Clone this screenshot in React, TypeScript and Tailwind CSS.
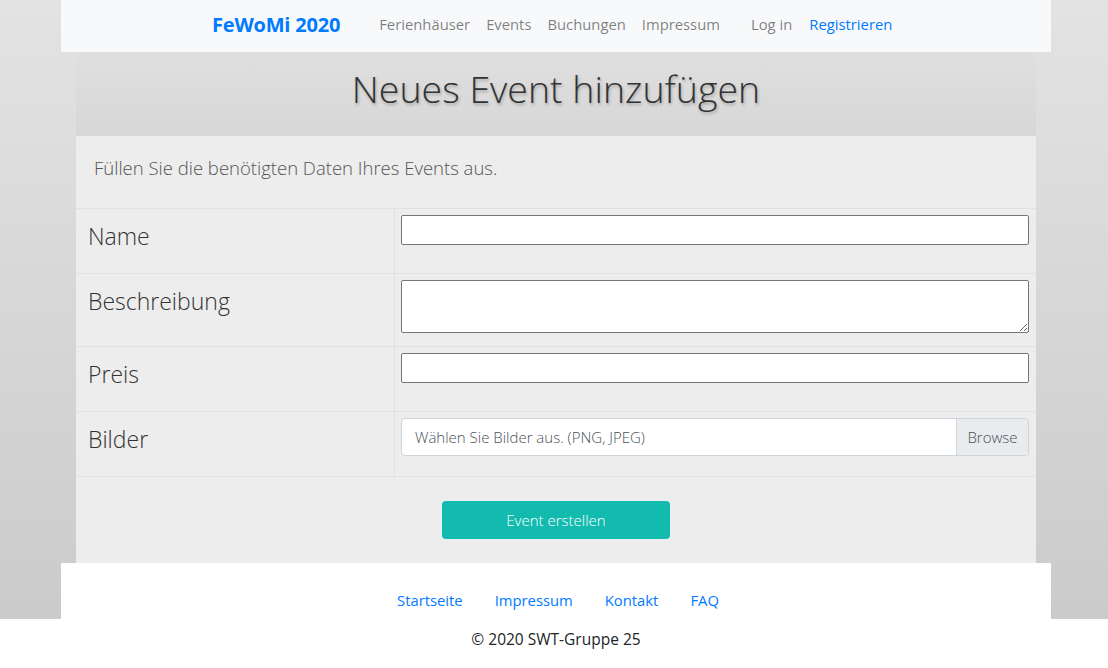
import React from "react";

const font = { fontFamily: "'Open Sans', 'Noto Sans', sans-serif" };

function Row({ label, children, h }: { label: string; children: React.ReactNode; h: string }) {
  return (
    <div className={`grid grid-cols-[319px_1fr] border-t border-[#dee2e6] ${h}`}>
      <div className="border-r border-[#dee2e6] pl-[12px] pt-[13px] text-[23px] leading-[29px] font-light text-[#333]">
        {label}
      </div>
      <div className="pl-[6px] pr-[7px] pt-[6px]">{children}</div>
    </div>
  );
}

export default function App() {
  return (
    <div className="min-h-screen bg-white text-[#212529]" style={font}>
      <div className="bg-gradient-to-b from-[#e3e3e3] to-[#cbcbcb]">
        <div className="ml-[61px] w-[990px]">
          <nav className="h-[52px] bg-[#f8f9fa] flex items-center pl-[151px] pb-[3px]">
            <span className="text-[20px] font-bold text-[#007bff] tracking-[-0.2px]">FeWoMi 2020</span>
            <div className="ml-[39px] flex items-center gap-[16px] text-[14.8px] text-[rgba(0,0,0,0.5)]">
              <span>Ferienhäuser</span>
              <span>Events</span>
              <span>Buchungen</span>
              <span>Impressum</span>
            </div>
            <div className="ml-[31px] flex items-center gap-[17px] text-[14.8px]">
              <span className="text-[rgba(0,0,0,0.5)]">Log in</span>
              <span className="text-[#007bff]">Registrieren</span>
            </div>
          </nav>
          <main className="mx-[15px]">
            <div className="h-[84px] bg-gradient-to-b from-[#dfdfdf] to-[#d7d7d7] flex items-center justify-center">
              <h1 className="text-[37.5px] font-light text-[#333] [text-shadow:1px_2px_3px_rgba(0,0,0,0.25)] pb-[10px]">
                Neues Event hinzufügen
              </h1>
            </div>
            <div className="bg-[#ededed]">
              <div className="h-[72px] flex items-center pl-[18px] pb-[9px] text-[18.5px] font-light text-[#555]">
                Füllen Sie die benötigten Daten Ihres Events aus.
              </div>
              <Row label="Name" h="h-[65px]">
                <input className="block w-full h-[30px] bg-white border border-[#767676] rounded-[2px]" />
              </Row>
              <Row label="Beschreibung" h="h-[73px]">
                <textarea className="block w-full h-[53px] bg-white border border-[#767676] rounded-[2px] resize-y" />
              </Row>
              <Row label="Preis" h="h-[65px]">
                <input className="block w-full h-[30px] bg-white border border-[#767676] rounded-[2px]" />
              </Row>
              <Row label="Bilder" h="h-[65px]">
                <div className="flex h-[38px] bg-white border border-[#ced4da] rounded-[4px] overflow-hidden text-[15px] font-light text-[#495057]">
                  <div className="flex-1 flex items-center pl-[13px]">Wählen Sie Bilder aus. (PNG, JPEG)</div>
                  <div className="w-[72px] flex items-center justify-center bg-[#e9ecef] border-l border-[#ced4da]">Browse</div>
                </div>
              </Row>
              <div className="h-[87px] border-t border-[#dee2e6] flex items-center justify-center">
                <button className="w-[228px] h-[38px] rounded-[4px] bg-[#13bbaf] text-white text-[15px] font-light">
                  Event erstellen
                </button>
              </div>
            </div>
          </main>
          <footer className="h-[56px] bg-white flex items-end justify-center pb-[8px] pl-[4px] gap-[32px] text-[14.8px] text-[#007bff]">
            <span>Startseite</span>
            <span>Impressum</span>
            <span>Kontakt</span>
            <span>FAQ</span>
          </footer>
        </div>
      </div>
      <div className="h-[40px] flex items-center justify-center pl-[4px] pt-[2px] text-[15.5px] text-[#212529]">© 2020 SWT-Gruppe 25</div>
    </div>
  );
}
